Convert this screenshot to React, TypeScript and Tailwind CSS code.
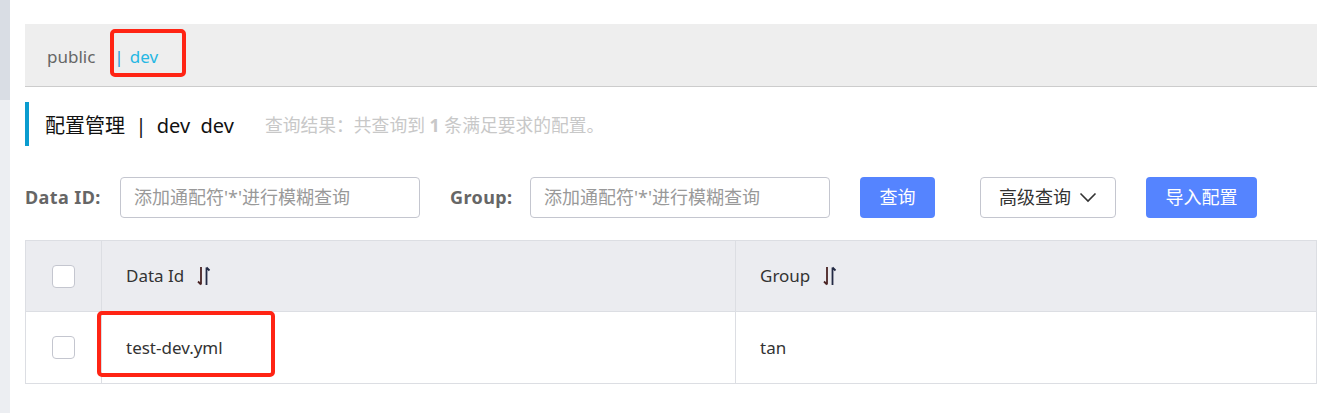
import React from "react";

function SortIcon() {
  return (
    <svg width="16" height="22" viewBox="0 0 16 22" fill="none" className="ml-[12px]">
      <path d="M5 2v17.5M5 19.5L2 16.5" stroke="#4a2424" strokeWidth="1.8" />
      <path d="M10.5 20V2.5M10.5 2.5l3 3" stroke="#232a44" strokeWidth="1.8" />
    </svg>
  );
}

function Checkbox() {
  return <div className="w-[23px] h-[23px] rounded-[4px] border border-[#c4c6cf] bg-white" />;
}

const placeholder = "添加通配符'*'进行模糊查询";

export default function App() {
  return (
    <div
      className="flex w-[1319px] h-[413px] bg-white overflow-hidden"
      style={{ fontFamily: '"Noto Sans", "Noto Sans CJK SC", sans-serif' }}
    >
      <div className="w-[10px] flex flex-col">
        <div className="h-[100px] bg-[#d9dde4]" />
        <div className="flex-1 bg-[#eceef2]" />
      </div>
      <div className="flex-1 pl-[15px] pr-[2px] pt-[24px]">
        {/* namespace tabs */}
        <div className="relative h-[63px] bg-[#eeeeee] border-b border-[#cccccc] flex items-center pt-[4px] pl-[22px] text-[17px]">
          <span className="text-[#666]">public</span>
          <span className="ml-[19px] text-[#1a9ad6]">|</span>
          <span className="ml-[6px] text-[#26b7e3]">dev</span>
          <span className="absolute left-[85px] top-[5px] w-[76px] h-[48px] border-[4px] border-[#ff2414] rounded-[5px]" />
        </div>

        {/* title */}
        <div className="mt-[15px] h-[44px] border-l-[4px] border-[#0a9ccf] flex items-center pt-[3px] pl-[16px]">
          <span className="text-[20px] text-[#111]">配置管理 &nbsp;|&nbsp; dev&nbsp; dev</span>
          <span className="ml-[31px] text-[17.8px] text-[#c8c8c8]">
            查询结果：共查询到 <b className="font-bold">1</b> 条满足要求的配置。
          </span>
        </div>

        {/* search bar */}
        <div className="mt-[31px] flex items-center h-[41px]">
          <span className="text-[18px] font-bold text-[#666] w-[95px] tracking-[0.4px]">Data ID:</span>
          <div className="w-[300px] h-[41px] border border-[#c4c6cf] rounded-[4px] flex items-center px-[13px] text-[18px] text-[#999]">
            {placeholder}
          </div>
          <span className="ml-[30px] text-[18px] font-bold text-[#666] w-[80px] tracking-[0.4px]">Group:</span>
          <div className="w-[300px] h-[41px] border border-[#c4c6cf] rounded-[4px] flex items-center px-[13px] text-[18px] text-[#999]">
            {placeholder}
          </div>
          <button className="ml-[30px] w-[75px] h-[41px] rounded-[4px] bg-[#5584ff] text-white text-[18px]">
            查询
          </button>
          <button className="ml-[45px] w-[136px] h-[41px] rounded-[4px] border border-[#c4c6cf] bg-white text-[#333] text-[18px] flex items-center justify-center gap-[8px]">
            高级查询
            <svg width="18" height="11" viewBox="0 0 18 11" fill="none">
              <path d="M1.5 1.5L9 9l7.5-7.5" stroke="#333" strokeWidth="1.6" />
            </svg>
          </button>
          <button className="ml-[30px] w-[111px] h-[41px] rounded-[4px] bg-[#5584ff] text-white text-[18px]">
            导入配置
          </button>
        </div>

        {/* table */}
        <div className="mt-[22px] border border-[#dcdee3] text-[17px] text-[#333]">
          <div className="flex h-[71px] bg-[#ebecf0] border-b border-[#dcdee3]">
            <div className="w-[76px] flex items-center justify-center border-r border-[#dcdee3]">
              <Checkbox />
            </div>
            <div className="w-[634px] flex items-center pl-[24px] border-r border-[#dcdee3]">
              Data Id
              <SortIcon />
            </div>
            <div className="flex-1 flex items-center pl-[24px]">
              Group
              <SortIcon />
            </div>
          </div>
          <div className="flex h-[71px]">
            <div className="w-[76px] flex items-center justify-center border-r border-[#dcdee3]">
              <Checkbox />
            </div>
            <div className="w-[634px] flex items-center pl-[24px] border-r border-[#dcdee3]">
              <span className="relative">
                test-dev.yml
                <span className="absolute left-[-29px] top-[-24px] w-[178px] h-[66px] border-[4px] border-[#ff2414] rounded-[5px]" />
              </span>
            </div>
            <div className="flex-1 flex items-center pl-[24px]">tan</div>
          </div>
        </div>
      </div>
    </div>
  );
}
